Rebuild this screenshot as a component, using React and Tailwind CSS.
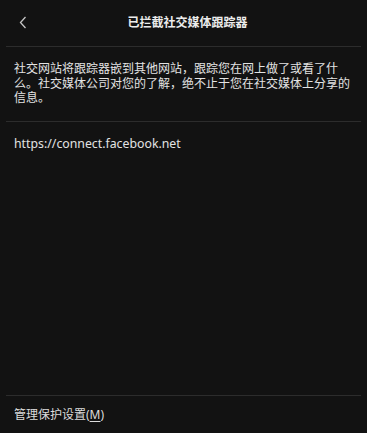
import React from "react";

const cjk = { fontFamily: '"Noto Sans", "Noto Sans CJK SC", sans-serif' };

const App = () => {
  return (
    <div
      className="flex flex-col h-[433px] w-full bg-[#121212] text-[#e3e3e3]"
      style={cjk}
    >
      {/* header */}
      <div className="relative flex items-center justify-center h-[46px]">
        <button className="absolute left-[15px] top-[13px] w-[16px] h-[18px] flex items-center justify-center">
          <svg width="8" height="13" viewBox="0 0 8 13" fill="none">
            <path d="M6.5 1 L1.5 6.5 L6.5 12" stroke="#c4c4c4" strokeWidth="1.3" />
          </svg>
        </button>
        <h1 className="text-[12px] font-bold leading-none ml-[8px] text-[#ececec]">
          已拦截社交媒体跟踪器
        </h1>
      </div>
      <div className="mx-[6px] h-px bg-[#2c2c2c]" />

      <div className="px-[14px] pt-[15px] pb-[15px]">
        <p className="text-[12px] leading-[14.5px]">
          社交网站将跟踪器嵌到其他网站，跟踪您在网上做了或看了什么。社交媒体公司对您的了解，绝不止于您在社交媒体上分享的信息。
        </p>
      </div>
      <div className="mx-[6px] h-px bg-[#2c2c2c]" />

      <div className="px-[14px] pt-[14px]">
        <p className="text-[12.3px] leading-[16px]">https://connect.facebook.net</p>
      </div>

      <div className="flex-1" />

      <div className="mx-[6px] h-px bg-[#2c2c2c]" />
      <div className="px-[14px] h-[37px] flex items-center">
        <span className="text-[12px] leading-none text-[#dcdcdc] pt-px">
          管理保护设置(<span className="underline underline-offset-2">M</span>)
        </span>
      </div>
    </div>
  );
};

export default App;
